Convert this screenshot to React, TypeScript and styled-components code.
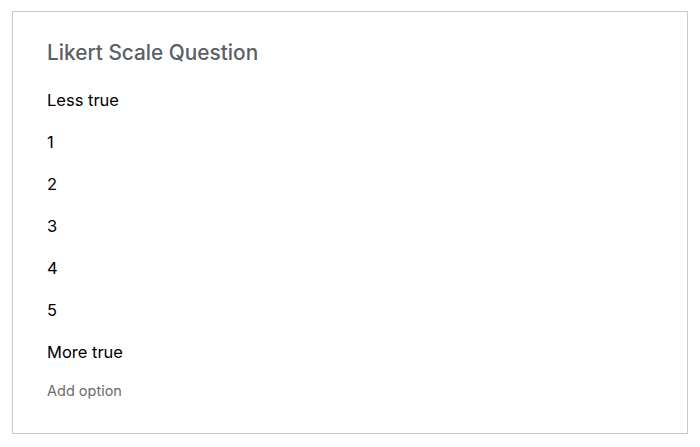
import styled, { createGlobalStyle } from "styled-components";

const GlobalStyle = createGlobalStyle`
  body {
    margin: 0;
    background: #ffffff;
    font-family: Inter, "Liberation Sans", Arial, sans-serif;
  }
`;

const OPTIONS = ["Less true", "1", "2", "3", "4", "5", "More true"];

const Card = styled.div`
  box-sizing: border-box;
  margin: 11px 0 0 12px;
  width: 676px;
  height: 423px;
  border: 1px solid #c8c8c8;
  padding: 28px 34px 0;
  display: flex;
  flex-direction: column;
`;

const Title = styled.h2`
  margin: 0 0 13px;
  font-size: 20.8px;
  font-weight: 500;
  line-height: 26px;
  color: #5b5f66;
`;

const OptionList = styled.div`
  display: flex;
  flex-direction: column;
`;

const Option = styled.div`
  height: 42px;
  line-height: 42px;
  font-size: 16.5px;
  color: #000000;
`;

const AddOption = styled.div`
  margin-top: 8px;
  font-size: 14.5px;
  line-height: 20px;
  color: #6b6b6b;
`;

export default function App() {
  return (
    <>
      <GlobalStyle />
      <Card>
        <Title>Likert Scale Question</Title>
        <OptionList>
          {OPTIONS.map((label) => (
            <Option key={label}>{label}</Option>
          ))}
        </OptionList>
        <AddOption>Add option</AddOption>
      </Card>
    </>
  );
}
